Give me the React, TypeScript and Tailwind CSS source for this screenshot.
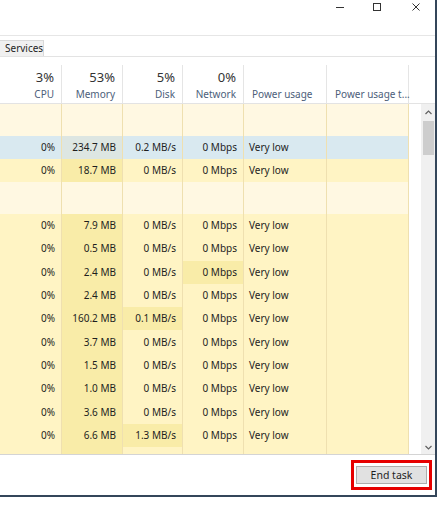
import React from 'react';

type Cell = { text: string; deep?: boolean };
type Row = { kind: 'group' } | { kind: 'row'; selected?: boolean; cells: Cell[] };

const cols = [
    { pct: '3%', label: 'CPU', align: 'right' },
    { pct: '53%', label: 'Memory', align: 'right' },
    { pct: '5%', label: 'Disk', align: 'right' },
    { pct: '0%', label: 'Network', align: 'right' },
    { pct: '', label: 'Power usage', align: 'left' },
    { pct: '', label: 'Power usage t...', align: 'left' },
];

const widths = ['w-[62px]', 'w-[61px]', 'w-[60px]', 'w-[61px]', 'w-[83px]', 'w-[82px]'];

function proc(mem: string, disk = '0 MB/s', opts: { diskDeep?: boolean; netDeep?: boolean } = {}): Row {
    return {
        kind: 'row',
        cells: [
            { text: '0%' },
            { text: mem, deep: true },
            { text: disk, deep: opts.diskDeep },
            { text: '0 Mbps', deep: opts.netDeep },
            { text: 'Very low' },
            { text: '' },
        ],
    };
}

// last row is only partly visible above the table edge, no text shows
const partial: Row = {
    kind: 'row',
    cells: [{ text: '' }, { text: '', deep: true }, { text: '' }, { text: '' }, { text: '' }, { text: '' }],
};

const rows: Row[] = [
    { kind: 'group' },
    {
        kind: 'row',
        selected: true,
        cells: [
            { text: '0%' },
            { text: '234.7 MB', deep: true },
            { text: '0.2 MB/s' },
            { text: '0 Mbps' },
            { text: 'Very low' },
            { text: '' },
        ],
    },
    proc('18.7 MB'),
    { kind: 'group' },
    proc('7.9 MB'),
    proc('0.5 MB'),
    proc('2.4 MB', '0 MB/s', { netDeep: true }),
    proc('2.4 MB'),
    proc('160.2 MB', '0.1 MB/s', { diskDeep: true }),
    proc('3.7 MB'),
    proc('1.5 MB'),
    proc('1.0 MB'),
    proc('3.6 MB'),
    proc('6.6 MB', '1.3 MB/s', { diskDeep: true }),
    partial,
];

function cellBg(selected: boolean | undefined, deep: boolean | undefined) {
    if (selected) return deep ? 'bg-[#dde6e2]' : 'bg-[#d9e9f0]';
    return deep ? 'bg-[#f9eca8]' : 'bg-[#fff4c4]';
}

export default function App() {
    return (
        <div className="w-[443px] h-[511px] bg-white overflow-hidden text-[#1e1e1e]" style={{ fontFamily: '"Noto Sans", "Liberation Sans", sans-serif' }}>
            <div className="w-[437px] h-[497px] flex flex-col border-r-2 border-b-2 border-[#34465a]">
                {/* title bar */}
                <div className="h-[36px] shrink-0 border-b border-[#e6e6e6] flex items-start">
                    <div className="flex-1" />
                    <div className="w-[8px] h-px bg-[#333] mt-[7px] mr-[29px]" />
                    <div className="w-[8px] h-[8px] border border-[#333] mt-[3px] mr-[31px]" />
                    <svg className="mt-[3px] mr-[15px]" width="8" height="8" viewBox="0 0 8 8">
                        <path d="M0.5 0.5 L7.5 7.5 M7.5 0.5 L0.5 7.5" stroke="#333" strokeWidth="1" />
                    </svg>
                </div>

                {/* tabs */}
                <div className="h-[21px] shrink-0 border-b border-[#e3e3e3] flex items-end">
                    <div className="h-[16px] w-[44px] bg-[#f0f0f0] border border-l-0 border-b-0 border-[#d9d9d9] text-[10px] leading-[15px] pl-[5px]">
                        Services
                    </div>
                </div>

                {/* header */}
                <div className="h-[47px] shrink-0 border-b border-[#e3e3e3] flex items-end">
                    {cols.map((c, i) => (
                        <div
                            key={i}
                            className={`${widths[i]} h-[38px] border-r border-[#e5e5e5] flex flex-col ${c.align === 'right' ? 'items-end pr-[7px]' : 'items-start pl-[8px]'}`}
                        >
                            <div className="h-[22px] pt-[4px] text-[13px] leading-[16px] text-[#333]">{c.pct}</div>
                            <div className="text-[10px] leading-[14px] text-[#4c607a] whitespace-nowrap">{c.label}</div>
                        </div>
                    ))}
                </div>

                {/* body */}
                <div className="h-[350px] shrink-0 flex overflow-hidden">
                    <div className="w-[409px] flex flex-col overflow-hidden">
                        {rows.map((r, ri) =>
                            r.kind === 'group' ? (
                                <div key={ri} className="h-[32px] shrink-0 flex bg-[#fff8e2]">
                                    {widths.map((w, i) => (
                                        <div key={i} className={`${w} h-full border-r border-[#efe0b0]`} />
                                    ))}
                                </div>
                            ) : (
                                <div key={ri} className={`${ri < 3 ? 'h-[23px]' : 'h-[23.3px]'} shrink-0 flex text-[10px]`}>
                                    {r.cells.map((c, i) => (
                                        <div
                                            key={i}
                                            className={`${widths[i]} h-full border-r border-[#efe0b0] ${cellBg(r.selected, c.deep)} flex items-center whitespace-nowrap ${i < 4 ? 'justify-end pr-[6px]' : 'pl-[5px]'}`}
                                        >
                                            {c.text}
                                        </div>
                                    ))}
                                </div>
                            )
                        )}
                    </div>
                    <div className="w-[12px]" />
                    {/* scrollbar */}
                    <div className="w-[14px] bg-[#f0f0f0] flex flex-col items-center">
                        <svg className="mt-[6px]" width="7" height="5" viewBox="0 0 7 5">
                            <path d="M0.5 4 L3.5 1 L6.5 4" stroke="#606060" strokeWidth="1.2" fill="none" />
                        </svg>
                        <div className="w-[11px] h-[34px] bg-[#cdcdcd] mt-[6px]" />
                        <div className="flex-1" />
                        <svg className="mb-[4px]" width="7" height="5" viewBox="0 0 7 5">
                            <path d="M0.5 1 L3.5 4 L6.5 1" stroke="#606060" strokeWidth="1.2" fill="none" />
                        </svg>
                    </div>
                </div>

                {/* footer */}
                <div className="flex-1 border-t border-[#d4d4d4] flex items-center justify-end pr-[3px]">
                    <div className="border-[3px] border-[#e60000] px-[2px] py-[3px]">
                        <div className="w-[71px] h-[18px] bg-[#e1e1e1] border border-[#adadad] text-[10.5px] leading-[16px] text-center">
                            End task
                        </div>
                    </div>
                </div>
            </div>
        </div>
    );
}
